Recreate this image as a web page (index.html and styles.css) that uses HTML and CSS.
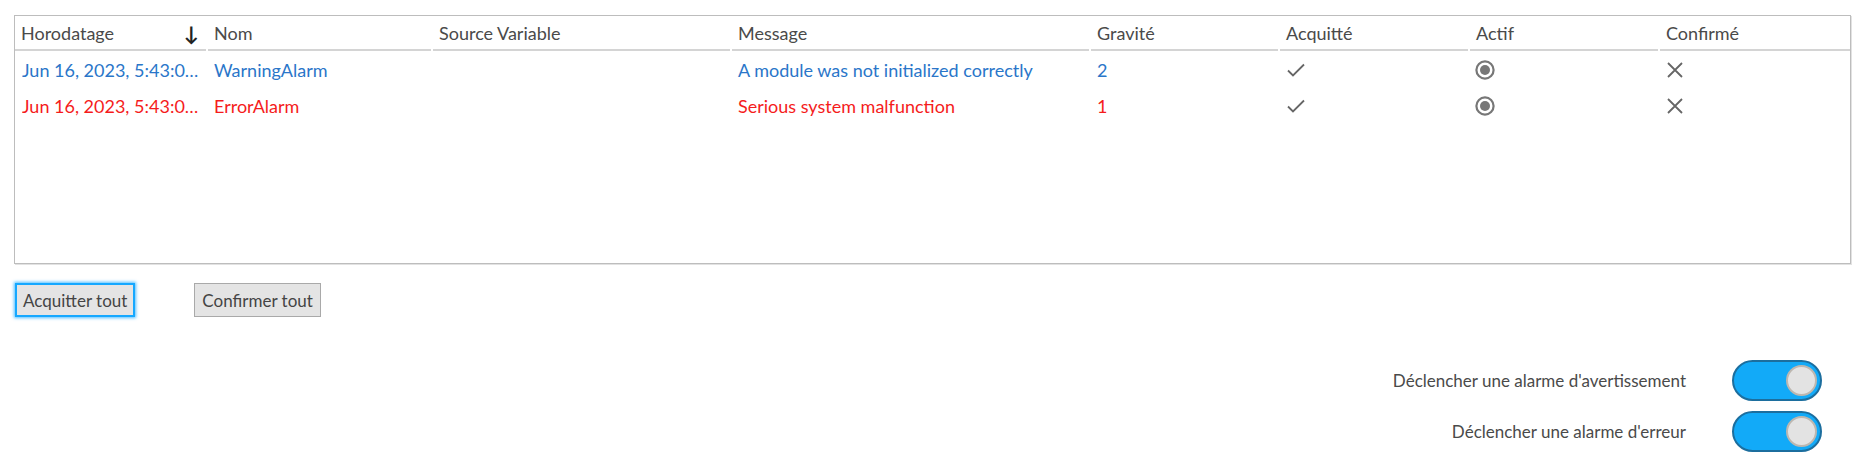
FILE: index.html
```html
<!DOCTYPE html>
<html lang="fr">
<head>
<meta charset="utf-8">
<title>Alarmes</title>
<link rel="stylesheet" href="styles.css">
</head>
<body>
<div class="page">
  <div class="grid">
    <div class="row head">
      <div class="cell hcell sort"><span>Horodatage</span><span class="arrow">↓</span></div>
      <div class="cell hcell">Nom</div>
      <div class="cell hcell">Source Variable</div>
      <div class="cell hcell">Message</div>
      <div class="cell hcell">Gravité</div>
      <div class="cell hcell">Acquitté</div>
      <div class="cell hcell">Actif</div>
      <div class="cell hcell">Confirmé</div>
    </div>
    <div class="row data warn">
      <div class="cell"><span class="trunc">Jun 16, 2023, 5:43:0…</span></div>
      <div class="cell">WarningAlarm</div>
      <div class="cell"></div>
      <div class="cell">A module was not initialized correctly</div>
      <div class="cell">2</div>
      <div class="cell"><svg class="ico check" viewBox="0 0 18 14" width="18" height="14"><path d="M1 7.5 L6 12.5 L17 1.5" fill="none" stroke="#666" stroke-width="1.8"/></svg></div>
      <div class="cell"><svg class="ico radio" viewBox="0 0 20 20" width="20" height="20"><circle cx="10" cy="10" r="8.6" fill="none" stroke="#777" stroke-width="2.2"/><circle cx="10" cy="10" r="5" fill="#777"/></svg></div>
      <div class="cell"><svg class="ico cross" viewBox="0 0 18 18" width="18" height="18"><path d="M2 2 L16 16 M16 2 L2 16" fill="none" stroke="#666" stroke-width="1.8"/></svg></div>
    </div>
    <div class="row data err">
      <div class="cell"><span class="trunc">Jun 16, 2023, 5:43:0…</span></div>
      <div class="cell">ErrorAlarm</div>
      <div class="cell"></div>
      <div class="cell">Serious system malfunction</div>
      <div class="cell">1</div>
      <div class="cell"><svg class="ico check" viewBox="0 0 18 14" width="18" height="14"><path d="M1 7.5 L6 12.5 L17 1.5" fill="none" stroke="#666" stroke-width="1.8"/></svg></div>
      <div class="cell"><svg class="ico radio" viewBox="0 0 20 20" width="20" height="20"><circle cx="10" cy="10" r="8.6" fill="none" stroke="#777" stroke-width="2.2"/><circle cx="10" cy="10" r="5" fill="#777"/></svg></div>
      <div class="cell"><svg class="ico cross" viewBox="0 0 18 18" width="18" height="18"><path d="M2 2 L16 16 M16 2 L2 16" fill="none" stroke="#666" stroke-width="1.8"/></svg></div>
    </div>
  </div>

  <div class="actions">
    <button class="btn focused">Acquitter tout</button>
    <button class="btn">Confirmer tout</button>
  </div>

  <div class="toggles">
    <div class="trow">
      <span class="tlabel">Déclencher une alarme d'avertissement</span>
      <span class="switch on"><span class="knob"></span></span>
    </div>
    <div class="trow">
      <span class="tlabel">Déclencher une alarme d'erreur</span>
      <span class="switch on"><span class="knob"></span></span>
    </div>
  </div>
</div>
</body>
</html>
```
FILE: styles.css
```css
* { box-sizing: border-box; }
html, body { margin: 0; padding: 0; background: #fff; }
body {
  font-family: Lato, "Open Sans", "Liberation Sans", sans-serif;
  font-size: 18px;
  color: #444;
}
.page {
  padding: 15px 20px 0 14px;
}
.grid {
  width: 1837px;
  height: 249px;
  border: 1px solid #bdbdbd;
  box-shadow: 1px 1px 0 #e2e2e2;
}
.row {
  display: grid;
  grid-template-columns: 192px 225px 299px 359px 189px 190px 190px 1fr;
}
.head {
  height: 35px;
}
.cell {
  display: flex;
  align-items: center;
  padding: 0 7px;
  white-space: nowrap;
  overflow: hidden;
}
.hcell {
  color: #4a4a4a;
  margin: 0 1px;
  border-bottom: 2px solid #d4d4d4;
  padding: 0 6px;
}
.hcell:first-child { margin-left: 0; }
.hcell:last-child { margin-right: 0; }
.sort { justify-content: space-between; padding-right: 7px; }
.arrow { color: #222; font-size: 20px; font-weight: 700; }
.data { height: 36px; }
.data .cell { padding-top: 1px; }
.warn { color: #2a76c9; }
.err { color: #f51c1c; }
.trunc { overflow: hidden; text-overflow: ellipsis; }
.ico { display: block; }
.check { margin-left: 1px; }
.radio { margin-left: -1px; }

.actions {
  display: flex;
  gap: 59px;
  margin-top: 19px;
  padding-left: 1px;
}
.btn {
  font-family: inherit;
  font-size: 17px;
  color: #444;
  background: #e4e4e4;
  border: 1px solid #a9a9a9;
  height: 34px;
  padding: 0 7px;
  margin: 0;
  border-radius: 0;
}
.btn.focused {
  border: 2px solid #15a8ff;
  box-shadow: 0 0 3px 1px rgba(21,168,255,0.75);
  padding: 0 6px;
}

.toggles {
  display: flex;
  flex-direction: column;
  align-items: flex-end;
  gap: 10px;
  margin-top: 43px;
  padding-right: 29px;
}
.trow {
  display: flex;
  align-items: center;
  gap: 46px;
}
.tlabel { color: #4a4a4a; font-size: 17px; }
.switch {
  display: flex;
  align-items: center;
  justify-content: flex-end;
  width: 90px;
  height: 41px;
  border-radius: 21px;
  background: #12aaf8;
  border: 2px solid #1c6e9e;
  padding-right: 3px;
}
.knob {
  width: 31px;
  height: 31px;
  border-radius: 50%;
  background: #e3e3e3;
  border: 2px solid #bdb7b0;
}
```
